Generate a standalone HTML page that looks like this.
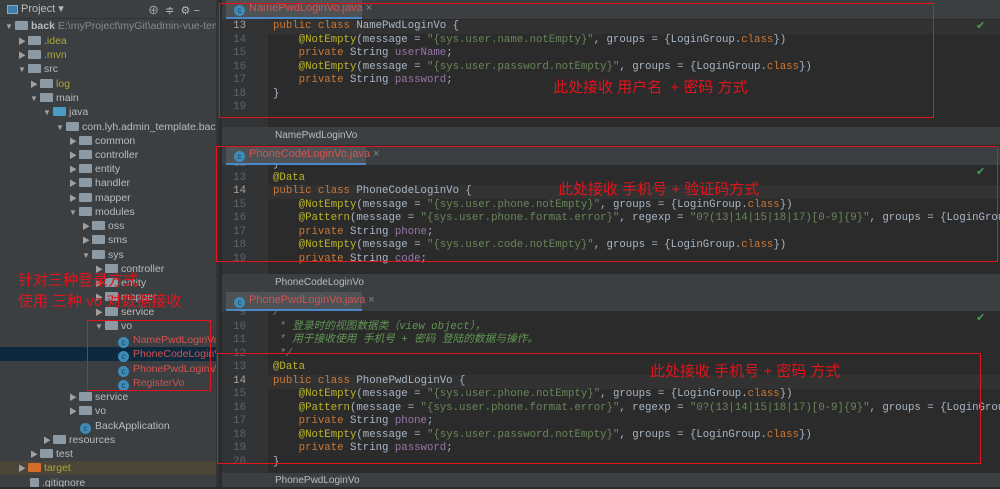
<!DOCTYPE html>
<html><head><meta charset="utf-8"><style>
*{margin:0;padding:0;box-sizing:border-box}
body{width:1000px;height:487px;overflow:hidden;background:#2b2b2b;position:relative;font-family:"Liberation Sans","Noto Sans CJK SC",sans-serif}
.a{position:absolute;white-space:pre}
#left{position:absolute;left:0;top:0;width:219px;height:487px;background:#3c3f41;overflow:hidden}
.t{position:absolute;font-size:10.5px;color:#bbbbbb;white-space:nowrap;height:14px;line-height:14px}
.ar{display:inline-block;width:10px;color:#a0a0a0;font-size:8px}
.fd{display:inline-block;width:13px;height:9px;background:#8c9aa5;margin-right:3px;vertical-align:-1px;border-radius:1px}
.ci{display:inline-block;width:11px;height:11px;border-radius:50%;background:#3d8bb8;color:#1d3c50;font-size:8px;line-height:11px;text-align:center;margin-right:4px;vertical-align:-2px}
.code{position:absolute;left:273px;right:0;overflow:hidden;font-family:"Liberation Mono",monospace;font-size:10.7px;color:#a9b7c6;white-space:pre;line-height:13.5px}
.ln{position:absolute;left:222px;width:24px;text-align:right;font-family:"Liberation Mono",monospace;font-size:10.7px;color:#606366;line-height:13.5px}
.k{color:#cc7832}.an{color:#bbb529}.s{color:#6a8759}.f{color:#9876aa}.c{color:#629755;font-style:italic}
.gut{position:absolute;left:222px;width:46px;background:#313335}
.tabbar{position:absolute;left:222px;right:0;height:19px;background:#3c3f41}
.tab{position:absolute;height:19px;background:#4e5254;border-bottom:2px solid #4a88c7;font-size:11px;color:#d25252;line-height:17px;padding-left:8px;white-space:nowrap}
.crumb{position:absolute;left:222px;right:0;height:18px;background:#3c3f41;font-size:10px;color:#bbbbbb;line-height:18px;padding-left:53px}
.red{position:absolute;border:1.5px solid #e3141b}
.rt{position:absolute;color:#e3141b;font-size:15px;white-space:pre}
.cur{position:absolute;left:268px;right:0;height:13.5px;background:#323232}
</style></head><body>
<div id="left">
<div class="a" style="left:0;top:0;width:219px;height:19px;background:#3c3f41;border-bottom:1px solid #323232"></div>
<div class="a" style="left:7px;top:5px;width:11px;height:9px;border:1.5px solid #8aa;background:#3e7fb0"></div>
<div class="a" style="left:21px;top:2px;font-size:11px;color:#bbb">Project ▾</div>
<div class="a" style="left:148px;top:2px;font-size:11px;color:#bbb">⊕  ≑  ⚙ −</div>
<div class="t" style="left:5px;top:19px"><span class="ar">▼</span><span class="fd"></span><b>back</b> <span style="color:#888">E:\myProject\myGit\admin-vue-template</span></div>
<div class="t" style="left:18px;top:34px"><span class="ar">▶</span><span class="fd"></span><span style="color:#a8a83a">.idea</span></div>
<div class="t" style="left:18px;top:48px"><span class="ar">▶</span><span class="fd"></span><span style="color:#a8a83a">.mvn</span></div>
<div class="t" style="left:18px;top:62px"><span class="ar">▼</span><span class="fd"></span>src</div>
<div class="t" style="left:30px;top:77px"><span class="ar">▶</span><span class="fd"></span><span style="color:#a8a83a">log</span></div>
<div class="t" style="left:30px;top:91px"><span class="ar">▼</span><span class="fd"></span>main</div>
<div class="t" style="left:43px;top:105px"><span class="ar">▼</span><span class="fd" style="background:#4a9cc7"></span>java</div>
<div class="t" style="left:56px;top:120px"><span class="ar">▼</span><span class="fd"></span>com.lyh.admin_template.back</div>
<div class="t" style="left:69px;top:134px"><span class="ar">▶</span><span class="fd"></span>common</div>
<div class="t" style="left:69px;top:148px"><span class="ar">▶</span><span class="fd"></span>controller</div>
<div class="t" style="left:69px;top:162px"><span class="ar">▶</span><span class="fd"></span>entity</div>
<div class="t" style="left:69px;top:176px"><span class="ar">▶</span><span class="fd"></span>handler</div>
<div class="t" style="left:69px;top:191px"><span class="ar">▶</span><span class="fd"></span>mapper</div>
<div class="t" style="left:69px;top:205px"><span class="ar">▼</span><span class="fd"></span>modules</div>
<div class="t" style="left:82px;top:219px"><span class="ar">▶</span><span class="fd"></span>oss</div>
<div class="t" style="left:82px;top:233px"><span class="ar">▶</span><span class="fd"></span>sms</div>
<div class="t" style="left:82px;top:248px"><span class="ar">▼</span><span class="fd"></span>sys</div>
<div class="t" style="left:95px;top:262px"><span class="ar">▶</span><span class="fd"></span>controller</div>
<div class="t" style="left:95px;top:276px"><span class="ar">▶</span><span class="fd"></span>entity</div>
<div class="t" style="left:95px;top:290px"><span class="ar">▶</span><span class="fd"></span>mapper</div>
<div class="t" style="left:95px;top:305px"><span class="ar">▶</span><span class="fd"></span>service</div>
<div class="t" style="left:95px;top:319px"><span class="ar">▼</span><span class="fd"></span>vo</div>
<div class="a" style="left:0;top:347px;width:219px;height:14px;background:#0d293e"></div>
<div class="t" style="left:118px;top:333px;color:#d25252"><span class="ci">c</span>NamePwdLoginVo</div>
<div class="t" style="left:118px;top:347px;color:#d25252"><span class="ci">c</span>PhoneCodeLoginVo</div>
<div class="t" style="left:118px;top:362px;color:#d25252"><span class="ci">c</span>PhonePwdLoginVo</div>
<div class="t" style="left:118px;top:376px;color:#d25252"><span class="ci">c</span>RegisterVo</div>
<div class="t" style="left:69px;top:390px"><span class="ar">▶</span><span class="fd"></span>service</div>
<div class="t" style="left:69px;top:404px"><span class="ar">▶</span><span class="fd"></span>vo</div>
<div class="t" style="left:80px;top:419px"><span class="ci">c</span>BackApplication</div>
<div class="t" style="left:43px;top:433px"><span class="ar">▶</span><span class="fd"></span>resources</div>
<div class="t" style="left:30px;top:447px"><span class="ar">▶</span><span class="fd"></span>test</div>
<div class="a" style="left:0;top:461px;width:219px;height:14px;background:#4a4538"></div>
<div class="t" style="left:18px;top:461px"><span class="ar">▶</span><span class="fd" style="background:#d36b2a"></span><span style="color:#a8a83a">target</span></div>
<div class="t" style="left:30px;top:476px"><span class="fd" style="width:9px"></span>.gitignore</div>
<div class="a" style="left:216px;top:0;width:3px;height:487px;background:#313335"></div>
</div>
<div class="rt" style="left:18px;top:269px">针对三种登录方式</div>
<div class="rt" style="left:18px;top:290px">使用 三种 vo 对数据接收</div>
<div class="red" style="left:87px;top:320px;width:124px;height:71px"></div>

<!-- panel 1 -->
<div class="gut" style="top:19px;height:108px"></div>
<div class="cur" style="top:20px"></div>
<div class="ln" style="top:20px"><span style="color:#a4a3a3">13</span><br>14<br>15<br>16<br>17<br>18<br>19</div>
<div class="code" style="top:20px"><span class="k">public class </span>NamePwdLoginVo {
    <span class="an">@NotEmpty</span>(message = <span class="s">"{sys.user.name.notEmpty}"</span>, groups = {LoginGroup.<span class="k">class</span>})
    <span class="k">private </span>String <span class="f">userName</span>;
    <span class="an">@NotEmpty</span>(message = <span class="s">"{sys.user.password.notEmpty}"</span>, groups = {LoginGroup.<span class="k">class</span>})
    <span class="k">private </span>String <span class="f">password</span>;
}
</div>
<div class="tabbar" style="top:0"></div>
<div class="tab" style="left:226px;top:0;width:136px"><span class="ci">c</span>NamePwdLoginVo.java <span style="color:#888">×</span></div>
<div class="crumb" style="top:127px">NamePwdLoginVo</div>
<div class="rt" style="left:553px;top:76px">此处接收 用户名  + 密码 方式</div>
<div class="red" style="left:219px;top:3px;width:715px;height:115px"></div>

<!-- panel 2 -->
<div class="a" style="left:222px;top:145px;right:0;height:129px;background:#2b2b2b"></div>
<div class="gut" style="top:145px;height:129px"></div>
<div class="cur" style="top:185px"></div>
<div class="ln" style="top:158px">12<br>13<br><span style="color:#a4a3a3">14</span><br>15<br>16<br>17<br>18<br>19</div>
<div class="code" style="top:158px">}
<span class="an">@Data</span>
<span class="k">public class </span>PhoneCodeLoginVo {
    <span class="an">@NotEmpty</span>(message = <span class="s">"{sys.user.phone.notEmpty}"</span>, groups = {LoginGroup.<span class="k">class</span>})
    <span class="an">@Pattern</span>(message = <span class="s">"{sys.user.phone.format.error}"</span>, regexp = <span class="s">"0?(13|14|15|18|17)[0-9]{9}"</span>, groups = {LoginGroup.<span class="k">class</span>})
    <span class="k">private </span>String <span class="f">phone</span>;
    <span class="an">@NotEmpty</span>(message = <span class="s">"{sys.user.code.notEmpty}"</span>, groups = {LoginGroup.<span class="k">class</span>})
    <span class="k">private </span>String <span class="f">code</span>;</div>
<div class="tabbar" style="top:146px"></div>
<div class="tab" style="left:226px;top:146px;width:140px"><span class="ci">c</span>PhoneCodeLoginVo.java <span style="color:#888">×</span></div>
<div class="crumb" style="top:274px">PhoneCodeLoginVo</div>
<div class="rt" style="left:558px;top:178px">此处接收 手机号 + 验证码方式</div>
<div class="red" style="left:216px;top:146px;width:782px;height:116px"></div>

<!-- panel 3 -->
<div class="a" style="left:222px;top:292px;right:0;height:181px;background:#2b2b2b"></div>
<div class="gut" style="top:292px;height:181px"></div>
<div class="cur" style="top:375px"></div>
<div class="ln" style="top:307px">9<br>10<br>11<br>12<br>13<br><span style="color:#a4a3a3">14</span><br>15<br>16<br>17<br>18<br>19<br>20</div>
<div class="code" style="top:307px"><span class="c">/**
 * 登录时的视图数据类（view object），
 * 用于接收使用 手机号 + 密码 登陆的数据与操作。
 */</span>
<span class="an">@Data</span>
<span class="k">public class </span>PhonePwdLoginVo {
    <span class="an">@NotEmpty</span>(message = <span class="s">"{sys.user.phone.notEmpty}"</span>, groups = {LoginGroup.<span class="k">class</span>})
    <span class="an">@Pattern</span>(message = <span class="s">"{sys.user.phone.format.error}"</span>, regexp = <span class="s">"0?(13|14|15|18|17)[0-9]{9}"</span>, groups = {LoginGroup.<span class="k">class</span>})
    <span class="k">private </span>String <span class="f">phone</span>;
    <span class="an">@NotEmpty</span>(message = <span class="s">"{sys.user.password.notEmpty}"</span>, groups = {LoginGroup.<span class="k">class</span>})
    <span class="k">private </span>String <span class="f">password</span>;
}</div>
<div class="tabbar" style="top:292px"></div>
<div class="tab" style="left:226px;top:292px;width:136px"><span class="ci">c</span>PhonePwdLoginVo.java <span style="color:#888">×</span></div>
<div class="crumb" style="top:473px;height:14px;line-height:16px">PhonePwdLoginVo</div>
<div class="rt" style="left:650px;top:360px">此处接收 手机号 + 密码 方式</div>
<div class="red" style="left:217px;top:353px;width:764px;height:111px"></div>

<div class="a" style="left:976px;top:19px;color:#499c54;font-size:11px">✔</div>
<div class="a" style="left:976px;top:165px;color:#499c54;font-size:11px">✔</div>
<div class="a" style="left:976px;top:311px;color:#499c54;font-size:11px">✔</div>
</body></html>
